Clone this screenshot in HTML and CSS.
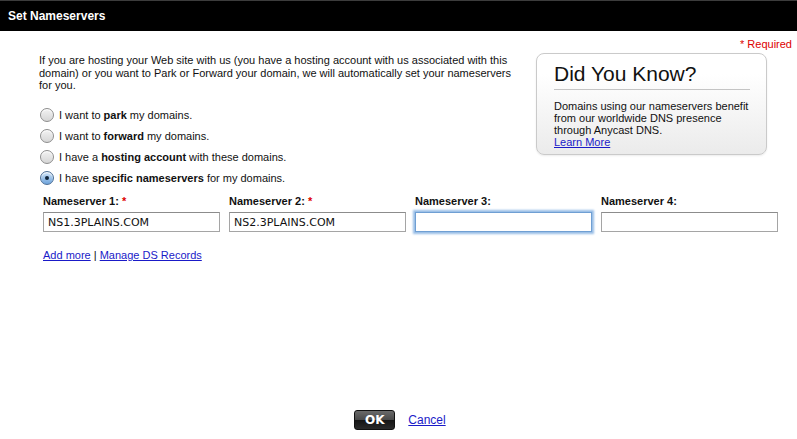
FILE: index.html
```html
<!DOCTYPE html>
<html lang="en">
<head>
  <meta charset="UTF-8">
  <title>Set Nameservers</title>
  <link rel="stylesheet" href="styles.css">
</head>
<body>

  <div class="dialog">
    <div class="titlebar">Set Nameservers</div>

    <div class="required"><span class="star">*</span> Required</div>

    <div class="top">
      <div class="intro">
        <p class="lead">If you are hosting your Web site with us (you have a hosting account with us associated with this domain) or you want to Park or Forward your domain, we will automatically set your nameservers for you.</p>

        <div class="choices">
          <label class="choice"><span class="radio"></span>I want to <b>park</b> my domains.</label>
          <label class="choice"><span class="radio"></span>I want to <b>forward</b> my domains.</label>
          <label class="choice"><span class="radio"></span>I have a <b>hosting account</b> with these domains.</label>
          <label class="choice"><span class="radio checked"></span>I have <b>specific nameservers</b> for my domains.</label>
        </div>
      </div>

      <div class="tip">
        <h2>Did You Know?</h2>
        <p>Domains using our nameservers benefit from our worldwide DNS presence through Anycast DNS.<br><a href="#">Learn More</a></p>
      </div>
    </div>

    <div class="servers">
      <div class="field">
        <label>Nameserver 1: <span class="star">*</span></label>
        <input type="text" value="NS1.3PLAINS.COM">
      </div>
      <div class="field">
        <label>Nameserver 2: <span class="star">*</span></label>
        <input type="text" value="NS2.3PLAINS.COM">
      </div>
      <div class="field">
        <label>Nameserver 3:</label>
        <input type="text" class="active" value="">
      </div>
      <div class="field">
        <label>Nameserver 4:</label>
        <input type="text" value="">
      </div>
    </div>

    <div class="more"><a href="#">Add more</a> | <a href="#">Manage DS Records</a></div>

    <div class="actions">
      <button class="ok">OK</button>
      <a href="#">Cancel</a>
    </div>
  </div>

</body>
</html>
```

FILE: styles.css
```css
body {
  margin: 0;
  background: #fff;
  color: #111;
  font-family: 'Liberation Sans', Arial, sans-serif;
  font-size: 11px;
}

a {
  color: #1a1ac8;
}

.dialog {
  display: flex;
  flex-direction: column;
  min-height: 100vh;
}

.titlebar {
  background: #000;
  border-top: 1px solid #3c3c3c;
  height: 30px;
  line-height: 31px;
  padding-left: 8px;
  color: #fff;
  font-weight: bold;
  font-size: 12px;
}

.required {
  text-align: right;
  padding-right: 5px;
  margin-top: 7px;
  line-height: 12px;
  color: #d00;
}

.star {
  color: #d00;
}

.top {
  display: flex;
  align-items: flex-start;
  margin-top: 3px;
}

.intro {
  padding-left: 39px;
  width: 472px;
}

.lead {
  margin: 1px 0 0;
  line-height: 12.5px;
}

.choices {
  display: flex;
  flex-direction: column;
  margin-top: 13px;
}

.choice {
  display: flex;
  align-items: center;
  height: 21px;
  padding-left: 1px;
}

.choice b {
  margin: 0 3px;
}

.radio {
  width: 12px;
  height: 12px;
  border: 1px solid #8d8d8d;
  border-radius: 50%;
  background: linear-gradient(#f2f2f2, #d6d6d6);
  box-shadow: inset 0 1px 1px #fff;
  margin-right: 5px;
  position: relative;
}

.radio.checked {
  border-color: #4d6f96;
  background: linear-gradient(#cfe3f7, #6ea4dc);
}

.radio.checked::after {
  content: "";
  position: absolute;
  left: 4px;
  top: 4px;
  width: 4px;
  height: 4px;
  border-radius: 50%;
  background: #10243a;
}

.tip {
  margin-left: auto;
  margin-right: 30px;
  width: 212px;
  height: 100px;
  padding: 0 0 0 17px;
  border: 1px solid #cacaca;
  border-radius: 8px;
  background: linear-gradient(#ffffff 20%, #ebebeb);
  box-shadow: 0 1px 2px rgba(0, 0, 0, 0.08);
}

.tip h2 {
  margin: 8px 16px 0 0;
  padding-bottom: 4px;
  border-bottom: 1px solid #c4c4c4;
  font-family: 'Liberation Sans', Arial, sans-serif;
  font-weight: normal;
  font-size: 21px;
  line-height: 23px;
  color: #111;
}

.tip p {
  margin: 10px 16px 0 0;
  line-height: 12px;
}

.servers {
  display: grid;
  grid-template-columns: repeat(4, 177px);
  column-gap: 9px;
  padding-left: 43px;
  margin-top: 6px;
}

.field label {
  display: block;
  font-weight: bold;
  line-height: 13px;
  margin-bottom: 4px;
}

.field input {
  box-sizing: border-box;
  width: 177px;
  height: 20px;
  margin: 0;
  border: 1px solid #a5a5a5;
  border-top-color: #8c8c8c;
  padding: 1px 4px 0;
  font-family: 'DejaVu Sans', sans-serif;
  font-size: 11px;
  color: #111;
  outline: none;
}

.field input.active {
  border-color: #6f9fd3;
  box-shadow: 0 0 2px 2px #98bde6;
}

.more {
  padding-left: 43px;
  margin-top: 17px;
  line-height: 13px;
}

.actions {
  margin-top: auto;
  padding-bottom: 9px;
  display: flex;
  justify-content: center;
  align-items: center;
  gap: 13px;
  font-size: 12px;
}

.ok {
  width: 41px;
  height: 20px;
  border: 1px solid #111;
  border-radius: 3px;
  background: linear-gradient(#6a6a6a 0%, #4a4a4a 48%, #151515 52%, #2a2a2a 100%);
  color: #fff;
  font-family: 'DejaVu Sans', sans-serif;
  font-weight: bold;
  font-size: 12px;
  padding: 0;
  margin-left: 3px;
}
```
